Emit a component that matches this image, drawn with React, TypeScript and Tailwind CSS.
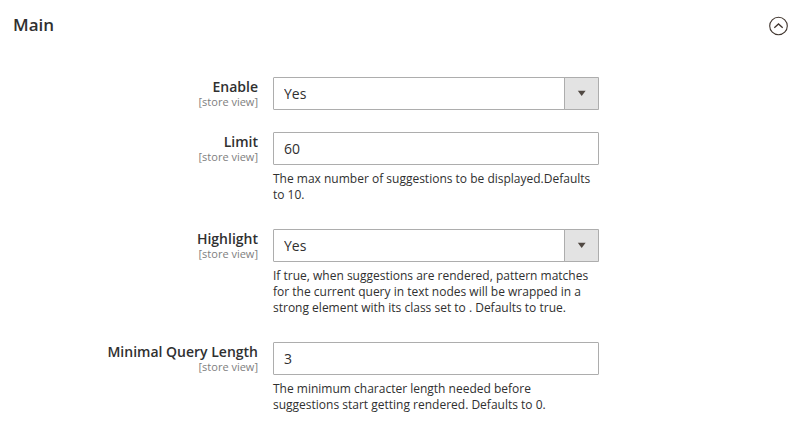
import React from "react";

type Field = {
  id: string;
  label: string;
  kind: "select" | "text";
  value: string;
  note?: string;
};

const fields: Field[] = [
  { id: "enable", label: "Enable", kind: "select", value: "Yes" },
  {
    id: "limit",
    label: "Limit",
    kind: "text",
    value: "60",
    note: "The max number of suggestions to be displayed.Defaults to 10.",
  },
  {
    id: "highlight",
    label: "Highlight",
    kind: "select",
    value: "Yes",
    note: "If true, when suggestions are rendered, pattern matches for the current query in text nodes will be wrapped in a strong element with its class set to . Defaults to true.",
  },
  {
    id: "min-length",
    label: "Minimal Query Length",
    kind: "text",
    value: "3",
    note: "The minimum character length needed before suggestions start getting rendered. Defaults to 0.",
  },
];

function SelectBox({ id, value }: { id: string; value: string }) {
  return (
    <div className="relative">
      <select
        id={id}
        defaultValue={value}
        className="block h-[33px] w-full appearance-none rounded-[1px] border border-[#adadad] bg-white px-[10px] text-[14px] text-[#303030]"
      >
        <option>Yes</option>
        <option>No</option>
      </select>
      <span className="pointer-events-none absolute inset-y-0 right-0 flex w-[35px] items-center justify-center rounded-r-[1px] border border-[#adadad] bg-[#e3e3e3]">
        <svg width="9" height="7" viewBox="0 0 9 7" aria-hidden="true">
          <path d="M.8 .7h7.800L4.700 6z" fill="#514943" />
        </svg>
      </span>
    </div>
  );
}

function FieldRow({ field }: { field: Field }) {
  return (
    <div className="grid grid-cols-[245fr_326fr_175fr] gap-[15px]">
      <div className="pt-px text-right">
        <label htmlFor={field.id} className="block text-[14px] leading-[18px] font-semibold">
          {field.label}
        </label>
        <span className="block text-[11px] leading-[12px] text-[#808080]">[store view]</span>
      </div>
      <div>
        {field.kind === "select" ? (
          <SelectBox id={field.id} value={field.value} />
        ) : (
          <input
            id={field.id}
            type="text"
            defaultValue={field.value}
            className="block h-[33px] w-full rounded-[1px] border border-[#adadad] bg-white px-[10px] text-[14px] text-[#303030]"
          />
        )}
        {field.note && <p className="pt-[6px] pb-1 text-[12px] leading-4">{field.note}</p>}
      </div>
    </div>
  );
}

export default function App() {
  return (
    <section className="bg-white px-[13px] pt-[14px] font-['Open_Sans',sans-serif] text-[#303030]">
      <header className="flex items-start justify-between">
        <h2 className="text-[17px] leading-[22px] font-semibold">Main</h2>
        <button type="button" aria-label="Collapse section" aria-expanded="true" className="flex h-6 items-center">
          <svg width="21" height="20" viewBox="0 0 21 20" fill="none" stroke="#41362f" aria-hidden="true">
            <circle cx="10.5" cy="10" r="8.800" strokeWidth="1.100" />
            <path d="M6.300 11.800L10.500 8l4.200 3.800" strokeWidth="1.300" />
          </svg>
        </button>
      </header>
      <div className="flex flex-col gap-[22px] pt-[39px] pb-3">
        {fields.map((field) => (
          <FieldRow key={field.id} field={field} />
        ))}
      </div>
    </section>
  );
}
